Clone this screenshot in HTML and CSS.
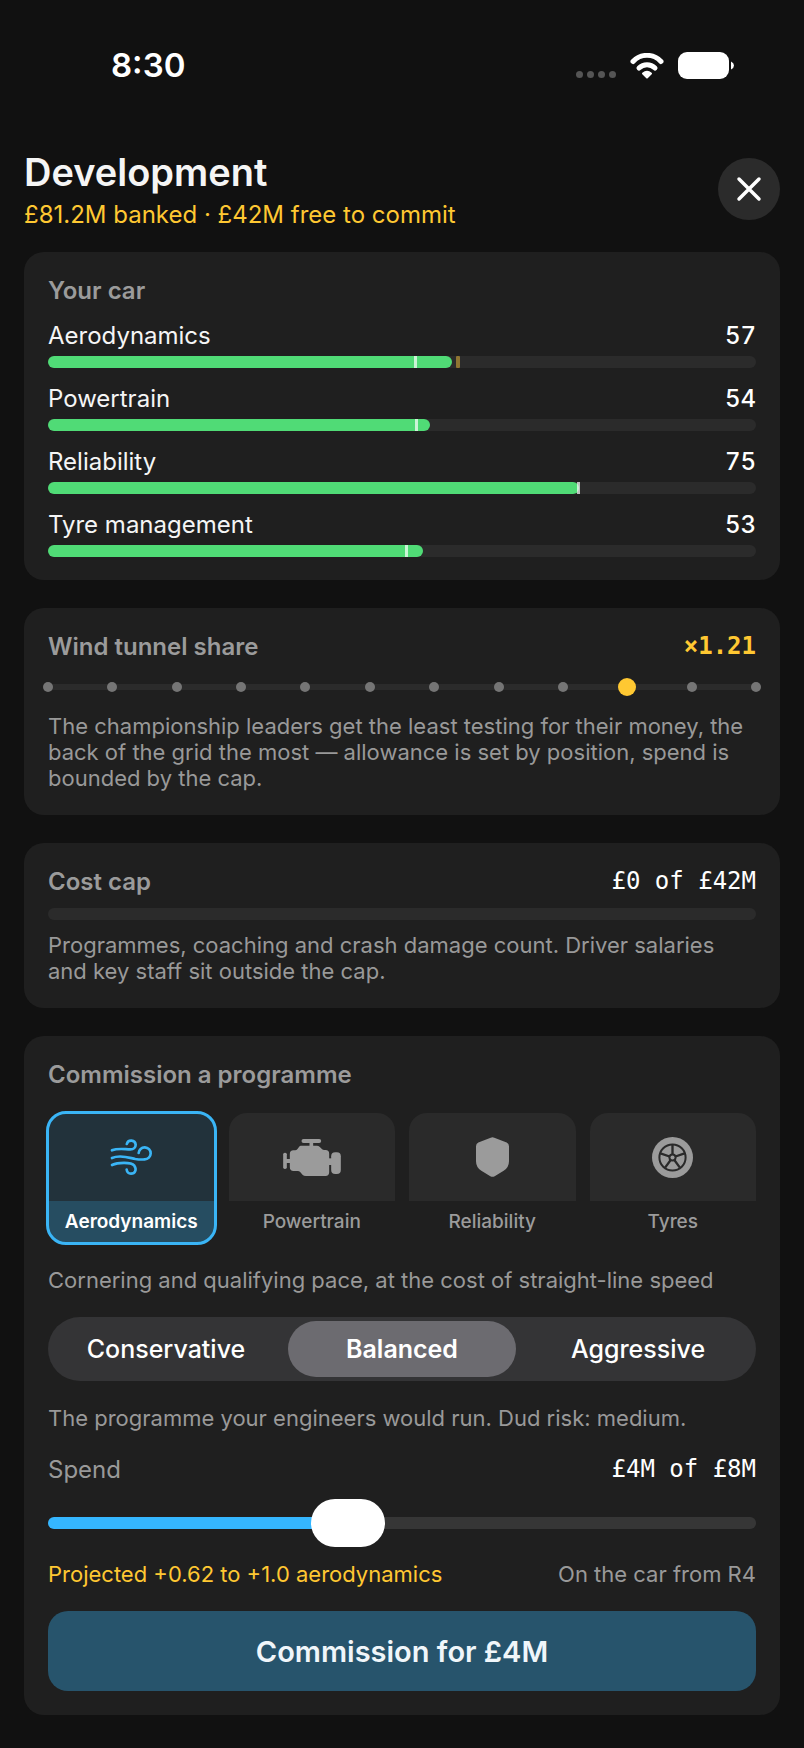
FILE: index.html
```html
<!DOCTYPE html>
<html lang="en">
<head>
  <meta charset="UTF-8" />
  <meta name="viewport" content="width=device-width, initial-scale=1.0"/>
  <title>Development</title>
  <link rel="stylesheet" href="styles.css">
</head>
<body>

<div class="statusbar">
  <span class="clock">8:30</span>
  <div class="status-icons">
    <div class="signal"><i></i><i></i><i></i><i></i></div>
    <svg class="wifi" viewBox="0 0 34 26" fill="none" stroke="#fff" stroke-linecap="round">
      <path stroke-width="5" d="M3 8.5A19 19 0 0 1 31 8.5"/>
      <path stroke-width="5" d="M9 15A11.5 11.5 0 0 1 25 15"/>
      <path fill="#fff" stroke-width="2" stroke-linejoin="round" d="M13 20.5Q17 17 21 20.5L17 24.5Z"/>
    </svg>
    <svg class="battery" viewBox="0 0 56 28" fill="#fff">
      <rect x="0" y="0" width="51" height="27" rx="9"/>
      <path d="M53 9.500Q56 11 56 13.500Q56 16 53 17.500Z"/>
    </svg>
  </div>
</div>

<header>
  <div>
    <h1>Development</h1>
    <p class="budget">£81.2M banked · £42M free to commit</p>
  </div>
  <button class="close" aria-label="Close">
    <svg viewBox="0 0 26 26" fill="none" stroke="#fff" stroke-width="3.500" stroke-linecap="round"><path d="M3 3L23 23M23 3L3 23"/></svg>
  </button>
</header>

<main>
  <section class="card ratings">
    <h2>Your car</h2>
    <div class="rating">
      <div class="row"><span>Aerodynamics</span><b>57</b></div>
      <div class="bar"><div class="fill" style="width:57%"></div><i class="tick" style="left:51.7%"></i><i class="projected" style="left:57.6%"></i></div>
    </div>
    <div class="rating">
      <div class="row"><span>Powertrain</span><b>54</b></div>
      <div class="bar"><div class="fill" style="width:54%"></div><i class="tick" style="left:51.8%"></i></div>
    </div>
    <div class="rating">
      <div class="row"><span>Reliability</span><b>75</b></div>
      <div class="bar"><div class="fill" style="width:75%"></div><i class="tick" style="left:74.7%"></i></div>
    </div>
    <div class="rating">
      <div class="row"><span>Tyre management</span><b>53</b></div>
      <div class="bar"><div class="fill" style="width:53%"></div><i class="tick" style="left:50.4%"></i></div>
    </div>
  </section>

  <section class="card tunnel">
    <div class="row"><h2>Wind tunnel share</h2><span class="mono gold">×1.21</span></div>
    <div class="dots">
      <i></i><i></i><i></i><i></i><i></i><i></i><i></i><i></i><i></i><i class="on"></i><i></i><i></i>
    </div>
    <p>The championship leaders get the least testing for their money, the back of the grid the most — allowance is set by position, spend is bounded by the cap.</p>
  </section>

  <section class="card cap">
    <div class="row"><h2>Cost cap</h2><span class="mono">£0 of £42M</span></div>
    <div class="bar"></div>
    <p>Programmes, coaching and crash damage count. Driver salaries and key staff sit outside the cap.</p>
  </section>

  <section class="card programme">
    <h2>Commission a programme</h2>
    <div class="tiles">
      <label class="tile">
        <input type="radio" name="area" checked>
        <span class="icon">
          <svg width="42" height="36" viewBox="0 0 124 108" fill="none" stroke="currentColor" stroke-width="8" stroke-linecap="round">
            <path d="M5 34C22 27 42 31 60 31C70 31 76 25 76 17A13.500 13.500 0 0 0 49.500 15"/>
            <path d="M5 57C30 46 55 56 75 60C88 62 95 62 103 61A18 18 0 1 0 85 42"/>
            <path d="M5 78C22 70 62 68 72 80C80 92 74 104 62 104C54 104 50 99 49 92"/>
          </svg>
        </span>
        <span class="name">Aerodynamics</span>
      </label>
      <label class="tile">
        <input type="radio" name="area">
        <span class="icon">
          <svg width="58" height="37" viewBox="0 0 173 111" fill="currentColor">
            <rect x="55" y="0" width="59" height="12" rx="6"/>
            <rect x="79" y="8" width="11" height="18"/>
            <path d="M53 20H101Q106 20 110 24L117 31Q119 33 123 33H127Q138 33 138 44V100Q138 111 127 111H68Q62 111 58 107L51 99Q48 96 44 96H31Q20 96 20 85V45Q20 34 31 34H36Q40 34 43 30L48 23Q50 20 53 20Z"/>
            <rect x="136" y="58" width="12" height="20"/>
            <rect x="144" y="40" width="29" height="65" rx="12"/>
            <rect x="0" y="41" width="11" height="49" rx="5"/>
            <rect x="8" y="60" width="14" height="12"/>
          </svg>
        </span>
        <span class="name">Powertrain</span>
      </label>
      <label class="tile">
        <input type="radio" name="area">
        <span class="icon">
          <svg width="33" height="40" viewBox="0 0 99 119" fill="currentColor">
            <path d="M44 2Q49.500 -1 55 2L92 16Q99 19 99 27V72Q99 90 83 101L56 117Q49.500 121 43 117L16 101Q0 90 0 72V27Q0 19 7 16Z"/>
          </svg>
        </span>
        <span class="name">Reliability</span>
      </label>
      <label class="tile">
        <input type="radio" name="area">
        <span class="icon">
          <svg class="wheel" width="41" height="41" viewBox="0 0 122 122">
            <circle cx="61" cy="61" r="61" fill="currentColor"/>
            <g fill="none" stroke="#2a2a2a" stroke-width="7">
              <circle cx="61" cy="61" r="39" stroke-width="6"/>
              <path d="M61 61V23M61 61L97 49M61 61L83 91M61 61L39 91M61 61L25 49"/>
            </g>
            <circle cx="61" cy="61" r="12" fill="#2a2a2a"/>
            <circle cx="61" cy="61" r="6" fill="currentColor"/>
          </svg>
        </span>
        <span class="name">Tyres</span>
      </label>
    </div>
    <p>Cornering and qualifying pace, at the cost of straight-line speed</p>

    <div class="segments">
      <label><input type="radio" name="approach"><span>Conservative</span></label>
      <label><input type="radio" name="approach" checked><span>Balanced</span></label>
      <label><input type="radio" name="approach"><span>Aggressive</span></label>
    </div>
    <p>The programme your engineers would run. Dud risk: medium.</p>

    <div class="spend">
      <div class="row"><label for="spend">Spend</label><span class="mono">£4M of £8M</span></div>
      <input id="spend" type="range" min="1" max="8" step="0.1" value="3.9">
      <div class="row small"><span class="gold">Projected +0.62 to +1.0 aerodynamics</span><span>On the car from R4</span></div>
    </div>

    <button class="commit">Commission for £4M</button>
  </section>
</main>

</body>
</html>
```

FILE: styles.css
```css
* {
  box-sizing: border-box;
}
body {
  margin: 0;
  padding: 0 24px 32px;
  background: #111;
  color: #f5f5f5;
  font-family: Inter, "Liberation Sans", sans-serif;
  font-size: 24px;
  line-height: 29px;
}
h1, h2, p {
  margin: 0;
}
h1 {
  font-size: 38px;
  line-height: 46px;
  font-weight: 600;
  margin-bottom: 5px;
}
h2 {
  font-size: 24px;
  line-height: 29px;
  font-weight: 600;
  color: #9b9b9b;
}
button, input {
  font-family: inherit;
}

/* status bar */
.statusbar {
  display: flex;
  justify-content: space-between;
  align-items: center;
  padding: 45px 46px 0 87px;
}
.clock {
  font-size: 33px;
  line-height: 41px;
  font-weight: 600;
  color: #fff;
}
.status-icons {
  display: flex;
  align-items: center;
  gap: 14px;
}
.signal {
  display: flex;
  gap: 4px;
  align-self: flex-end;
  padding-bottom: 2px;
}
.signal i {
  width: 7px;
  height: 7px;
  border-radius: 50%;
  background: #555;
}
.wifi {
  width: 34px;
  height: 26px;
}
.battery {
  width: 56px;
  height: 28px;
}

header {
  display: flex;
  justify-content: space-between;
  align-items: center;
  padding: 63px 0 23px;
}
.budget, .gold {
  color: #ffc832;
}
.close {
  display: flex;
  align-items: center;
  justify-content: center;
  width: 62px;
  height: 62px;
  padding: 0;
  border: none;
  border-radius: 50%;
  background: #2b2b2b;
  cursor: pointer;
}
.close svg {
  width: 26px;
  height: 26px;
}

main {
  display: flex;
  flex-direction: column;
  gap: 28px;
}
.card {
  display: flex;
  flex-direction: column;
  padding: 24px;
  border-radius: 20px;
  background: #1f1f1f;
}
.card p, .small {
  font-size: 22px;
  line-height: 26px;
  color: #999;
}
.row {
  display: flex;
  justify-content: space-between;
}
.mono {
  font-family: "DejaVu Sans Mono", "Liberation Mono", monospace;
  color: #fff;
}
.mono.gold {
  font-weight: bold;
  color: #ffc832;
}

/* bars */
.ratings {
  gap: 16px;
  padding-bottom: 23px;
}
.rating b {
  font-weight: 500;
  font-variant-numeric: tabular-nums;
  color: #fff;
}
.rating .bar {
  margin-top: 6px;
}
.bar {
  position: relative;
  height: 12px;
  border-radius: 6px;
  background: #2b2b2b;
}
.fill {
  height: 100%;
  border-radius: 6px;
  background: #50db76;
}
.tick, .projected {
  position: absolute;
  top: 0;
  width: 3px;
  height: 12px;
  background: rgba(255,255,255,0.7);
}
.projected {
  width: 4px;
  border-radius: 1px;
  background: #8f7532;
}

.tunnel {
  gap: 16px;
}
.dots {
  position: relative;
  display: flex;
  justify-content: space-between;
  align-items: center;
  height: 20px;
  margin: 0 -9px;
}
.dots::before {
  content: "";
  position: absolute;
  left: 9px;
  right: 9px;
  height: 6px;
  background: #2b2b2b;
}
.dots i {
  position: relative;
  width: 10px;
  height: 10px;
  margin: 0 4px;
  border-radius: 50%;
  background: #757575;
}
.dots .on {
  width: 18px;
  height: 18px;
  margin: 0;
  background: #ffc832;
}
.cap {
  gap: 12px;
}

/* programme picker */
.programme {
  gap: 24px;
}
.tiles {
  display: grid;
  grid-template-columns: repeat(4, 1fr);
  gap: 14px;
}
.tile {
  display: flex;
  flex-direction: column;
  border-radius: 18px;
  overflow: hidden;
  text-align: center;
  color: #9b9b9b;
  cursor: pointer;
}
.tile input, .segments input {
  position: absolute;
  opacity: 0;
  pointer-events: none;
}
.icon {
  display: flex;
  align-items: center;
  justify-content: center;
  height: 88px;
  background: #2a2a2a;
}
.name {
  font-size: 19px;
  line-height: 42px;
  font-weight: 500;
}
.tile:has(input:checked) {
  outline: 3px solid #3ab5f6;
  outline-offset: -1px;
}
.tile input:checked ~ .icon {
  background: #22323b;
  color: #3ab5f6;
}
.tile input:checked ~ .name {
  background: #264d61;
  color: #fff;
  font-weight: 600;
}

.segments {
  display: grid;
  grid-template-columns: repeat(3, 1fr);
  border-radius: 32px;
  background: #343436;
}
.segments label {
  padding: 4px;
  text-align: center;
}
.segments span {
  display: block;
  border-radius: 28px;
  font-size: 25px;
  line-height: 56px;
  font-weight: 500;
  color: #fff;
  cursor: pointer;
}
.segments input:checked + span {
  background: #6c6b70;
  font-weight: 600;
}

.spend {
  display: flex;
  flex-direction: column;
  gap: 14px;
}
.spend label {
  color: #999;
}
.spend input {
  appearance: none;
  width: 100%;
  height: 49px;
  margin: 0;
  background: none;
}
.spend input::-webkit-slider-runnable-track {
  height: 12px;
  border-radius: 6px;
  background: linear-gradient(to right, #35b6ff 42%, #363636 42%);
}
.spend input::-webkit-slider-thumb {
  appearance: none;
  width: 74px;
  height: 48px;
  margin-top: -18px;
  border-radius: 24px;
  background: #fff;
}

.commit {
  height: 80px;
  border: none;
  border-radius: 20px;
  background: #27546c;
  color: #f0f6fa;
  font-size: 29px;
  font-weight: 600;
  cursor: pointer;
}
```
